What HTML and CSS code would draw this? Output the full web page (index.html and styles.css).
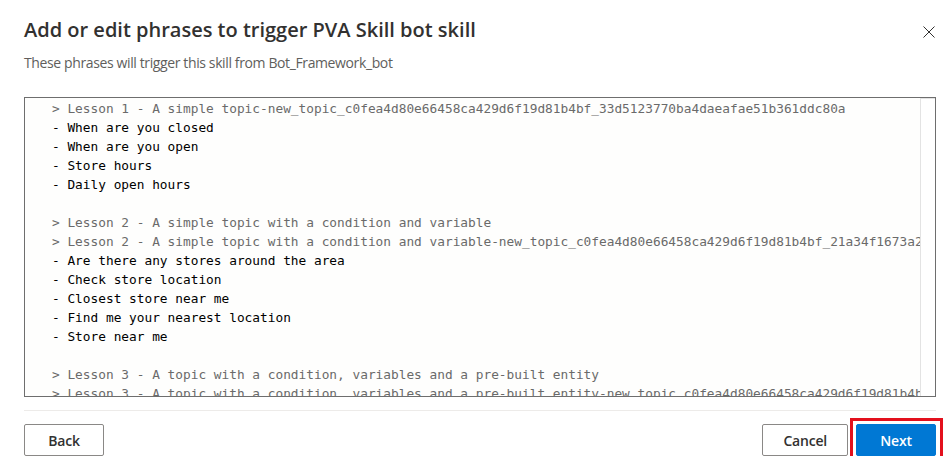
FILE: index.html
```html
<!DOCTYPE html>
<html lang="en">
<head>
<meta charset="utf-8">
<title>Add or edit phrases</title>
<link rel="stylesheet" href="styles.css">
</head>
<body>
<div class="dialog">
  <header class="dialog-header">
    <h1 class="title">Add or edit phrases to trigger PVA Skill bot skill</h1>
    <button class="close" aria-label="Close">
      <svg width="12" height="12" viewBox="0 0 12 12"><path d="M0.5 0.5 L11.5 11.5 M11.5 0.5 L0.5 11.5" stroke="#323130" stroke-width="1" fill="none"/></svg>
    </button>
  </header>
  <p class="subtitle">These phrases will trigger this skill from Bot_Framework_bot</p>
  <div class="editor">
    <div class="editor-content">
<div class="line topic">&gt; Lesson 1 - A simple topic-new_topic_c0fea4d80e66458ca429d6f19d81b4bf_33d5123770ba4daeafae51b361ddc80a</div>
<div class="line">- When are you closed</div>
<div class="line">- When are you open</div>
<div class="line">- Store hours</div>
<div class="line">- Daily open hours</div>
<div class="line"> </div>
<div class="line topic">&gt; Lesson 2 - A simple topic with a condition and variable</div>
<div class="line topic">&gt; Lesson 2 - A simple topic with a condition and variable-new_topic_c0fea4d80e66458ca429d6f19d81b4bf_21a34f1673a24c0e8b1d5f6e7a9c2b3d</div>
<div class="line">- Are there any stores around the area</div>
<div class="line">- Check store location</div>
<div class="line">- Closest store near me</div>
<div class="line">- Find me your nearest location</div>
<div class="line">- Store near me</div>
<div class="line"> </div>
<div class="line topic">&gt; Lesson 3 - A topic with a condition, variables and a pre-built entity</div>
<div class="line topic">&gt; Lesson 3 - A topic with a condition, variables and a pre-built entity-new_topic_c0fea4d80e66458ca429d6f19d81b4bf_8e4f2a1b3c5d</div>
    </div>
    <div class="scrollbar"></div>
  </div>
  <div class="divider"></div>
  <footer class="actions">
    <button class="btn">Back</button>
    <div class="spacer"></div>
    <button class="btn">Cancel</button>
    <span class="highlight"><button class="btn primary">Next</button></span>
  </footer>
</div>
</body>
</html>
```
FILE: styles.css
```css
* { box-sizing: border-box; }
html, body { margin: 0; padding: 0; background: #ffffff; }
body {
  font-family: "Segoe UI", "Open Sans", "Noto Sans", sans-serif;
  color: #323130;
}
.dialog {
  width: 951px;
  padding: 16px 15px 0 24px;
  display: flex;
  flex-direction: column;
}
.dialog-header {
  display: flex;
  align-items: center;
  justify-content: space-between;
  height: 28px;
}
.title {
  margin: 0;
  font-size: 20px;
  font-weight: 600;
  line-height: 28px;
  color: #323130;
  letter-spacing: 0;
}
.close {
  border: 0;
  background: transparent;
  padding: 0;
  margin-right: 1px;
  width: 12px;
  height: 12px;
  display: flex;
  margin-top: 3px;
}
.subtitle {
  margin: 9px 0 0 0;
  font-size: 14px;
  line-height: 20px;
  color: #605e5c;
  letter-spacing: -0.38px;
}
.editor {
  margin-top: 24px;
  height: 300px;
  border: 1px solid #6e6e6e;
  background: #fefefd;
  display: flex;
  overflow: hidden;
}
.editor-content {
  flex: 1;
  min-width: 0;
  overflow: hidden;
  padding: 1px 0 0 27px;
  font-family: "DejaVu Sans Mono", "Liberation Mono", monospace;
  font-size: 12.8px;
  line-height: 19px;
}
.line {
  white-space: pre;
  color: #000000;
  height: 19px;
}
.line.topic { color: #6a6a6a; }
.scrollbar {
  width: 15px;
  flex: none;
  border-left: 1px solid #e3e3e3;
  border-top: 1px solid #e3e3e3;
  background: #ffffff;
}
.divider {
  margin-top: 13px;
  height: 1px;
  background: #edebe9;
}
.actions {
  margin-top: 13px;
  display: flex;
  align-items: center;
  gap: 8px;
}
.spacer { flex: 1; }
.btn {
  height: 32px;
  min-width: 80px;
  padding: 0 20px;
  border: 1px solid #8a8886;
  border-radius: 2px;
  background: #ffffff;
  color: #323130;
  font-family: "Segoe UI", "Open Sans", "Noto Sans", sans-serif;
  font-size: 14px;
  font-weight: 600;
  letter-spacing: -0.2px;
}
.btn.primary {
  background: #0078d4;
  border-color: #0078d4;
  color: #ffffff;
  display: block;
}
.highlight {
  display: block;
  border: 3px solid #e3101d;
  padding: 3px;
  margin: -6px -7px -6px -6px;
  padding-right: 4px;
}
```
